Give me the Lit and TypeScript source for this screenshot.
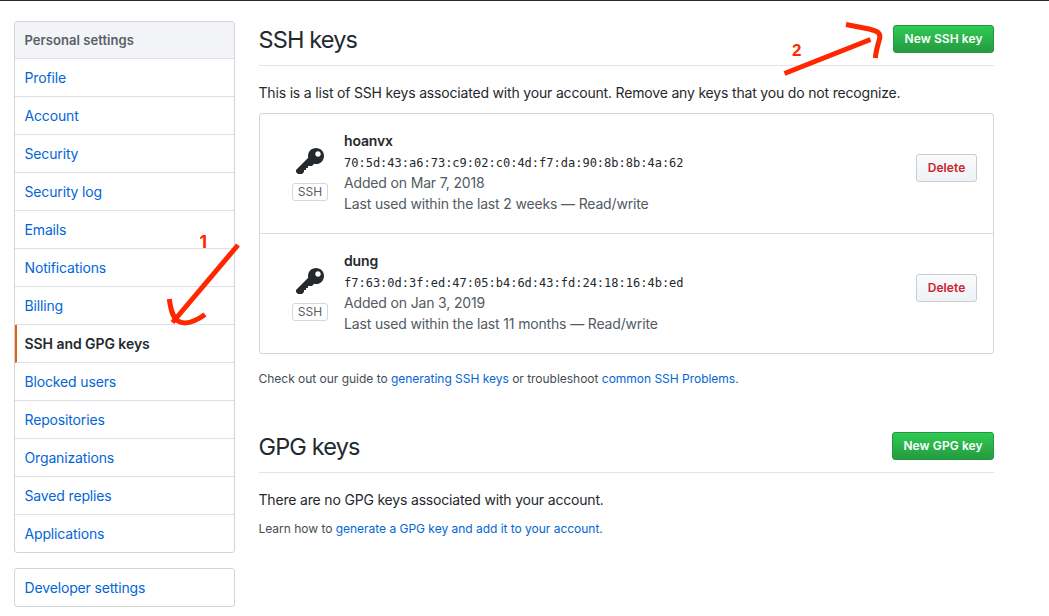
import { LitElement, html, css, svg } from "lit";
import { customElement } from "lit/decorators.js";
import { classMap } from "lit/directives/class-map.js";

interface SshKey {
  name: string;
  fingerprint: string;
  added: string;
  used: string;
}

const MENU = [
  "Profile", "Account", "Security", "Security log", "Emails", "Notifications",
  "Billing", "SSH and GPG keys", "Blocked users", "Repositories",
  "Organizations", "Saved replies", "Applications",
];

const KEYS: SshKey[] = [
  {
    name: "hoanvx",
    fingerprint: "70:5d:43:a6:73:c9:02:c0:4d:f7:da:90:8b:8b:4a:62",
    added: "Added on Mar 7, 2018",
    used: "Last used within the last 2 weeks — Read/write",
  },
  {
    name: "dung",
    fingerprint: "f7:63:0d:3f:ed:47:05:b4:6d:43:fd:24:18:16:4b:ed",
    added: "Added on Jan 3, 2019",
    used: "Last used within the last 11 months — Read/write",
  },
];

const keyGlyph = svg`<path fill-rule="evenodd" d="M12.83 2.17C12.08 1.42 11.14 1.03 10 1c-1.13.03-2.08.42-2.83 1.17S6.04 3.86 6.01 5c0 .3.03.59.09.89L0 12v1l1 1h2l1-1v-1h1v-1h1v-1h2l1.09-1.11c.3.08.59.11.91.11 1.14-.03 2.08-.42 2.83-1.17S13.97 6.14 14 5c-.03-1.14-.42-2.08-1.17-2.83zM11 5.38c-.77 0-1.38-.61-1.38-1.38 0-.77.61-1.38 1.38-1.38.77 0 1.38.61 1.38 1.38 0 .77-.61 1.38-1.38 1.38z"/>`;

@customElement("settings-menu")
export class SettingsMenu extends LitElement {
  static styles = css`
    :host { display: block; width: 221px; }
    .menu {
      display: flex; flex-direction: column; box-sizing: border-box;
      border: 1px solid #d1d5da; border-radius: 3px; background: #fff; overflow: hidden;
    }
    .menu + .menu { margin-top: 15px; }
    .heading {
      height: 36px; line-height: 37px; padding: 0 9.5px; background: #f3f4f8;
      border-bottom: 1px solid #dcdfe5; color: #586069;
      font-size: 13px; font-weight: 600; letter-spacing: 0.05px;
    }
    .item {
      height: 37px; line-height: 38px; padding: 0 9.5px; color: #0366d6;
      text-decoration: none; white-space: nowrap; letter-spacing: -0.15px;
      border-bottom: 1px solid #dcdfe5;
    }
    .item:last-child { border-bottom: 0; }
    .item.selected {
      padding-left: 7.5px; border-left: 2px solid #e36209;
      color: #24292e; font-weight: 600; letter-spacing: -0.06px;
    }
  `;
  render() {
    return html`
      <nav class="menu">
        <div class="heading">Personal settings</div>
        ${MENU.map((m) => html`<a class=${classMap({ item: true, selected: m === "SSH and GPG keys" })}>${m}</a>`)}
      </nav>
      <nav class="menu"><a class="item">Developer settings</a></nav>
    `;
  }
}

@customElement("app-root")
export class AppRoot extends LitElement {
  static styles = css`
    :host {
      display: block; position: relative; box-sizing: border-box;
      width: 1049px; height: 616px; overflow: hidden;
      border-top: 1px solid #24292e; background: #fff; color: #24292e;
      font: 14px/21px Inter, "Liberation Sans", sans-serif;
    }
    .page { display: flex; gap: 24px; padding: 20px 0 0 14px; }
    .main { width: 735px; white-space: nowrap; }
    .head {
      display: flex; justify-content: space-between; align-items: flex-start;
      height: 44px; border-bottom: 1px solid #e1e4e8;
    }
    h2 { margin: 0 0 0 -0.5px; font-size: 23.5px; line-height: 38px; font-weight: 400; letter-spacing: -0.85px; }
    .button {
      font: 600 12px/20px Inter, "Liberation Sans", sans-serif;
      box-sizing: border-box; height: 28px; padding: 3px 10px; margin: 0;
      border: 1px solid #c9ccd0; border-radius: 3px;
      white-space: nowrap; text-align: center;
    }
    .primary {
      margin-top: 4px; width: 101px; padding: 3px 0; color: #fff; border-color: #259440;
      background: linear-gradient(180deg, #2fcb53, #269f42 90%); letter-spacing: 0.08px;
    }
    .primary.wide { width: 102px; }
    .danger {
      width: 61px; padding: 3px 0; color: #cb2431; letter-spacing: 0.08px;
      background: linear-gradient(180deg, #fafbfc, #eff3f6 90%);
    }
    .intro { margin: 16px 0 10px -0.5px; letter-spacing: -0.18px; }
    .list { border: 1px solid #d1d5da; border-radius: 3px; }
    .row { display: flex; height: 119px; align-items: center; }
    .row + .row { border-top: 1px solid #d9dce0; }
    .kind {
      display: flex; flex-direction: column; align-items: center;
      width: 36px; margin-left: 32px; gap: 5px; height: 55px;
    }
    .kind svg { width: 28px; height: 32px; fill: #24292e; }
    .tag {
      box-sizing: border-box; width: 36px; height: 18px; border: 1px solid #d3d6da;
      border-radius: 3px; font-size: 12px; line-height: 16px; text-align: center; color: #586069;
    }
    .details {
      display: flex; flex-direction: column; flex: 1; height: 84px;
      margin: 0 0 4px 16px; color: #525a63; letter-spacing: -0.16px;
    }
    .name { font-weight: 600; color: #24292e; }
    .print {
      padding-top: 4px; font-family: "DejaVu Sans Mono", monospace; font-size: 12px;
      line-height: 17px; letter-spacing: 0; color: #24292e;
    }
    .row .button { margin: 0 16px 12px 0; }
    .note { margin: 15px 0 0 -0.5px; font-size: 12px; line-height: 20px; letter-spacing: -0.02px; color: #444d56; }
    .link { color: #0366d6; }
    .gpg { margin-top: 39px; }
    .gpg .intro { margin-bottom: 9px; }
    .gpg .note { margin-top: 0; }
    .marks { position: absolute; left: 0; top: -1px; width: 1049px; height: 616px; pointer-events: none; }
    .stroke { fill: none; stroke: #ff2600; stroke-width: 5; }
    .digit { fill: #ff2600; font: 700 17px "Liberation Sans", sans-serif; }
    .digit.thin { font: 700 17.5px Inter, sans-serif; }
  `;

  private row(k: SshKey) {
    return html`<div class="row">
      <div class="kind">
        <svg viewBox="0 0 14 16">${keyGlyph}</svg>
        <span class="tag">SSH</span>
      </div>
      <div class="details">
        <span class="name">${k.name}</span>
        <span class="print">${k.fingerprint}</span>
        <span class="added">${k.added}</span>
        <span class="used">${k.used}</span>
      </div>
      <button class="button danger">Delete</button>
    </div>`;
  }

  render() {
    return html`
      <div class="page">
        <settings-menu></settings-menu>
        <main class="main">
          <section>
            <div class="head"><h2>SSH keys</h2><button class="button primary">New SSH key</button></div>
            <p class="intro">This is a list of SSH keys associated with your account. Remove any keys that you do not recognize.</p>
            <div class="list">${KEYS.map((k) => this.row(k))}</div>
            <p class="note">Check out our guide to <a class="link">generating SSH keys</a> or troubleshoot <a class="link">common SSH Problems</a>.</p>
          </section>
          <section class="gpg">
            <div class="head"><h2>GPG keys</h2><button class="button primary wide">New GPG key</button></div>
            <p class="intro">There are no GPG keys associated with your account.</p>
            <p class="note">Learn how to <a class="link">generate a GPG key and add it to your account</a>.</p>
          </section>
        </main>
      </div>
      <svg class="marks" viewBox="0 0 1049 616">
        <path class="stroke" d="M238 245 L172.500 322.500"/>
        <path class="stroke" d="M169.300 299 C171 312 173.500 319.500 180 322 C188 325 196 321 205 314.500"/>
        <path class="stroke" d="M784.500 73.500 L870.500 39.500"/>
        <path class="stroke" d="M846 24.500 L869 29 C878 31 881 33.500 879.500 39 C877.500 46 876 51 875.300 58"/>
        <text class="digit thin" x="199.500" y="248">1</text>
        <text class="digit" x="792" y="56">2</text>
      </svg>
    `;
  }
}
